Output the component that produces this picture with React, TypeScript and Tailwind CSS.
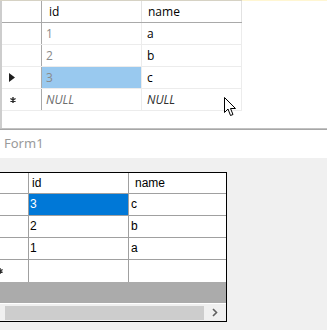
import React from 'react';

const topRows = [
  { id: '1', name: 'a', marker: '' },
  { id: '2', name: 'b', marker: '' },
  { id: '3', name: 'c', marker: 'current' },
  { id: 'NULL', name: 'NULL', marker: 'new' },
];

const bottomRows = [
  { id: '3', name: 'c', selected: true },
  { id: '2', name: 'b', selected: false },
  { id: '1', name: 'a', selected: false },
];

const Cursor = () => (
  <svg width="13" height="20" viewBox="0 0 13 20" className="absolute left-[224px] top-[97px]">
    <path d="M0.5 0.5 L0.5 15.5 L4 12 L6.5 18.5 L9 17.5 L6.5 11.5 L11.5 11.5 Z" fill="white" stroke="black" strokeWidth="1" strokeLinejoin="miter" />
  </svg>
);

// small pencil-less "new row" asterisk, drawn as a tiny star
const NewRowMark = ({ className }: { className?: string }) => (
  <svg width="6" height="6" viewBox="0 0 6 6" className={className}>
    <path d="M3 0 V6 M0.4 1.5 L5.6 4.5 M0.4 4.5 L5.6 1.5" stroke="#2a2a2a" strokeWidth="1.4" />
  </svg>
);

export default function App() {
  return (
    <div className="w-[327px] h-[330px] overflow-hidden bg-[#f0f0f0] flex flex-col">
      {/* query results grid */}
      <div className="relative h-[128px] bg-white flex flex-col" style={{ fontFamily: '"Open Sans", "Noto Sans", sans-serif' }}>
        <div className="h-px flex shrink-0">
          <div className="w-[242px] bg-[#d6d2c4]" />
          <div className="flex-1 bg-[#fff6d2]" />
        </div>
        <div className="flex flex-1">
          <div className="w-[2px] bg-[#cdcdcd]" />
          <div className="w-[240px] flex flex-col">
            <div className="h-[22px] flex border-b border-[#a9a9a9] text-[12px] text-black">
              <div className="w-[39px]" />
              <div className="w-[100px] border-l border-[#a9a9a9] pl-[7px] leading-[21px]">id</div>
              <div className="w-[101px] border-l border-r border-[#e2e2e2] pl-[6px] leading-[21px]">name</div>
            </div>
            {topRows.map((r) => (
              <div key={r.id} className="h-[22px] flex border-b border-[#ececec] text-[12px]">
                <div className="w-[39px] flex items-center pl-[7px]">
                  {r.marker === 'current' && (
                    <svg width="6" height="9" viewBox="0 0 6 9"><path d="M0 0 L6 4.5 L0 9 Z" fill="#1e1e1e" /></svg>
                  )}
                  {r.marker === 'new' && <NewRowMark className="ml-[1px]" />}
                </div>
                <div
                  className={`w-[100px] border-l border-[#a9a9a9] pl-[4px] leading-[21px] ${
                    r.marker === 'current' ? 'bg-[#99c9ef]' : ''
                  } ${r.marker === 'new' ? 'italic text-[#6d6d6d]' : 'text-[#8a8a8a]'}`}
                >
                  {r.id}
                </div>
                <div
                  className={`w-[101px] border-l border-r border-[#ececec] pl-[5px] leading-[21px] ${
                    r.marker === 'new' ? 'italic text-[#303030]' : 'text-black'
                  }`}
                >
                  {r.name}
                </div>
              </div>
            ))}
          </div>
          <div className="flex-1" />
        </div>
        <Cursor />
      </div>

      {/* splitter */}
      <div className="h-[2px] bg-gradient-to-b from-[#cfcfcf] to-[#9a9a9a] shrink-0" />

      {/* Form1 title bar */}
      <div className="h-[28px] bg-white flex items-center pl-[4px] text-[13px] text-[#9a9a9a] shrink-0" style={{ fontFamily: '"Noto Sans", "Open Sans", sans-serif' }}>
        Form1
      </div>

      {/* form body */}
      <div className="flex-1 bg-[#f0f0f0] pt-[14px]" style={{ fontFamily: '"Liberation Sans", Arial, sans-serif' }}>
        <div className="w-[227px] border-t border-r border-b border-black bg-white flex flex-col text-[12px] text-black">
          <div className="h-[21px] flex border-b border-[#a0a0a0]">
            <div className="w-[29px] border-r border-[#a0a0a0]" />
            <div className="w-[100px] border-r border-[#a0a0a0] pl-[3px] leading-[20px]">id</div>
            <div className="flex-1 pl-[6px] leading-[20px]">name</div>
          </div>
          {bottomRows.map((r) => (
            <div key={r.id} className="h-[22px] flex border-b border-[#a0a0a0]">
              <div className="w-[29px] border-r border-[#a0a0a0]" />
              <div className={`w-[100px] border-r border-[#a0a0a0] pl-[1px] leading-[21px] ${r.selected ? 'bg-[#0078d7] text-white' : ''}`}>
                {r.id}
              </div>
              <div className="flex-1 pl-[2px] leading-[21px]">{r.name}</div>
            </div>
          ))}
          <div className="h-[22px] flex">
            <div className="w-[29px] border-r border-[#a0a0a0] relative overflow-hidden">
              <NewRowMark className="absolute left-[-3px] top-[8px]" />
            </div>
            <div className="w-[100px] border-r border-[#a0a0a0]" />
            <div className="flex-1" />
          </div>
          <div className="h-[22px] bg-[#ababab] border-b border-white" />
          <div className="h-[17px] bg-[#f0f0f0] flex items-center">
            <div className="ml-[5px] w-[199px] h-[14px] bg-[#cdcdcd]" />
            <div className="flex-1 flex justify-center">
              <svg width="6" height="9" viewBox="0 0 6 9"><path d="M1 1 L4.5 4.5 L1 8" fill="none" stroke="#606060" strokeWidth="1.6" /></svg>
            </div>
          </div>
        </div>
      </div>
    </div>
  );
}
